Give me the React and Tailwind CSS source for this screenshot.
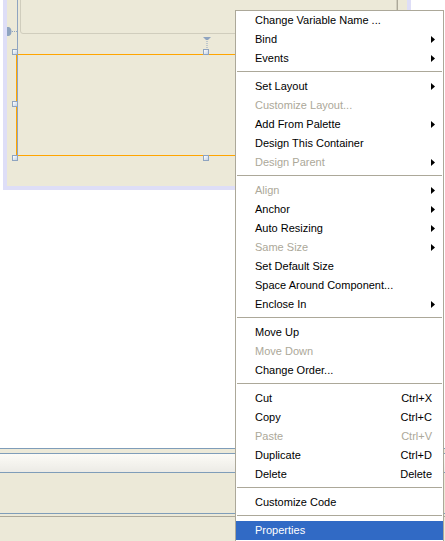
import React from 'react';

const items = [
  { label: 'Change Variable Name ...' },
  { label: 'Bind', sub: true },
  { label: 'Events', sub: true },
  { sep: true },
  { label: 'Set Layout', sub: true },
  { label: 'Customize Layout...', disabled: true },
  { label: 'Add From Palette', sub: true },
  { label: 'Design This Container' },
  { label: 'Design Parent', sub: true, disabled: true },
  { sep: true },
  { label: 'Align', sub: true, disabled: true },
  { label: 'Anchor', sub: true },
  { label: 'Auto Resizing', sub: true },
  { label: 'Same Size', sub: true, disabled: true },
  { label: 'Set Default Size' },
  { label: 'Space Around Component...' },
  { label: 'Enclose In', sub: true },
  { sep: true },
  { label: 'Move Up' },
  { label: 'Move Down', disabled: true },
  { label: 'Change Order...' },
  { sep: true },
  { label: 'Cut', key: 'Ctrl+X' },
  { label: 'Copy', key: 'Ctrl+C' },
  { label: 'Paste', key: 'Ctrl+V', disabled: true },
  { label: 'Duplicate', key: 'Ctrl+D' },
  { label: 'Delete', key: 'Delete' },
  { sep: true },
  { label: 'Customize Code' },
  { sep: true },
  { label: 'Properties', active: true },
];

function Arrow() {
  return (
    <svg width="4" height="7" viewBox="0 0 4 7" className="mr-[8px]">
      <path d="M0 0 L4 3.5 L0 7 Z" fill="#000" />
    </svg>
  );
}

function Handle({ className }) {
  return (
    <div
      className={
        'absolute w-[6px] h-[6px] border border-[#8fa4c0] bg-gradient-to-br from-white to-[#c5d3e6] ' +
        className
      }
    />
  );
}

function ContextMenu() {
  return (
    <div className="absolute left-[235px] top-[10px] w-[209px] border border-[#aca899] bg-white pb-px">
      {items.map((it, i) =>
        it.sep ? (
          <div key={i} className="h-[9px] px-[1px] pt-[3px]">
            <div className="h-px bg-[#aca899]" />
          </div>
        ) : (
          <div
            key={i}
            className={
              'h-[19px] flex items-center pl-[19px] ' +
              (it.active
                ? 'bg-[#316ac5] text-white'
                : it.disabled
                ? 'text-[#aca899]'
                : 'text-black')
            }
          >
            <span className="flex-1">{it.label}</span>
            {it.key && <span className="mr-[11px]">{it.key}</span>}
            {it.sub && <Arrow />}
          </div>
        )
      )}
    </div>
  );
}

export default function App() {
  return (
    <div
      className="relative w-[445px] h-[541px] overflow-hidden bg-white flex flex-col text-[11px] leading-none"
      style={{ fontFamily: '"Liberation Sans", Arial, sans-serif' }}
    >
      {/* design canvas */}
      <div className="ml-[3px] w-[408px] h-[190px] bg-[#dedef7] pl-[4px] pr-[4px] pb-[4px]">
        <div className="relative w-full h-full bg-[#ece9d8]">
          {/* parent container border */}
          <div className="absolute left-[13px] top-[-4px] right-[10px] h-[38px] border border-[#d0cdbd] rounded-b-[3px]" />
          <div className="absolute left-[390px] top-0 w-px h-[186px] bg-[#aca899]" />
          {/* left anchor */}
          <svg className="absolute left-0 top-[27px]" width="10" height="9" viewBox="0 0 10 9">
            <path d="M0 0 L2 0 Q4.5 1 4.5 4.5 Q4.5 8 2 9 L0 9 Z" fill="#8fa4c0" />
            <path d="M5 4.5 H10" stroke="#8fa4c0" strokeDasharray="1 1" />
          </svg>
          {/* top anchor */}
          <svg className="absolute left-[196px] top-[37px]" width="8" height="13" viewBox="0 0 8 13">
            <path d="M0 0 H8 L5 3 H3 Z" fill="#8fa4c0" />
            <path d="M4 4 V13" stroke="#8fa4c0" strokeDasharray="1 1" />
          </svg>
          {/* selection */}
          <div className="absolute left-[9px] top-[54px] right-0 h-[102px] border-t border-b border-l border-[#ffa500]" />
          <div className="absolute left-[10px] top-0 w-px h-[155px] bg-[#8fa4c0]" />
          <Handle className="left-[5px] top-[49px]" />
          <Handle className="left-[196px] top-[49px]" />
          <Handle className="left-[5px] top-[101px]" />
          <Handle className="left-[5px] top-[155px]" />
          <Handle className="left-[196px] top-[155px]" />
        </div>
      </div>

      <div className="flex-1" />

      {/* bottom panels */}
      <div className="h-px bg-[#7f9db9]" />
      <div className="h-[4px] bg-[#ece9d8]" />
      <div className="h-px bg-[#7f9db9]" />
      <div className="h-[18px] bg-gradient-to-b from-[#fcfbf6] to-[#ecebe6]" />
      <div className="h-px bg-[#7f9db9]" />
      <div className="h-[40px] bg-[#ece9d8]" />
      <div className="h-px bg-[#7f9db9]" />
      <div className="h-[2px] bg-[#ece9d8]" />
      <div className="h-px bg-[#aca899]" />
      <div className="h-[24px] bg-[#ece9d8]" />

      <ContextMenu />
    </div>
  );
}
